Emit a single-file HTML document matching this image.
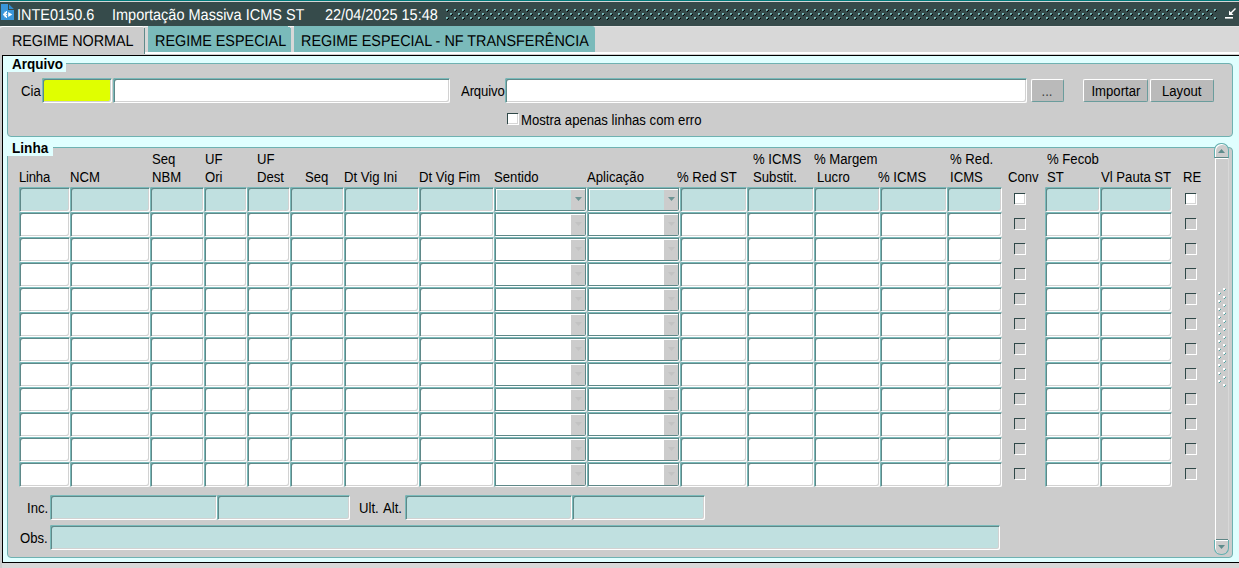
<!DOCTYPE html>
<html><head><meta charset="utf-8"><title>INTE0150.6</title>
<style>
html,body{margin:0;padding:0}
body{width:1239px;height:568px;overflow:hidden;position:relative;background:#d8d8d8;
 font-family:"Liberation Sans",sans-serif;font-size:13px}
body>div,body>span,body>svg{position:absolute;display:block}
span{white-space:nowrap;line-height:16px;transform:scaleX(0.9094);transform-origin:0 0}
.f{border-radius:2px;box-shadow:inset 1px 1px 0 #7ababa, inset -1px -1px 0 #fff, inset 2px 2px 0 #5f8888, inset -2px -2px 0 #d2d2d2}
.f.d{box-shadow:inset 1px 1px 0 #7ababa, inset -1px -1px 0 #fff, inset 2px 2px 0 #5f8888, inset -2px -2px 0 #5f8888}
.b b{display:inline-block;font-weight:normal;font-size:14.46px;transform:scaleX(0.9094)}
.b{background:#bababa;border:1px solid;border-color:#fff #6a9c9c #6a9c9c #fff;border-radius:2px;text-align:center;font-size:13px}
.c.x{box-shadow:inset 1px 1px 0 #2f4848, 1px 1px 0 #fff}
.c{width:11px;height:11px;box-shadow:inset 1px 1px 0 #2f4848, inset -1px -1px 0 #d6d6d6, 1px 1px 0 #fff}
</style></head>
<body>
<div  style="left:0px;top:0px;width:1239px;height:1px;background:#007b7b;"></div>
<div  style="left:0px;top:1px;width:1239px;height:1px;background:#d6d6d6;"></div>
<div  style="left:0px;top:2px;width:1239px;height:24px;background:#364b4b;"></div>
<svg style="left:0px;top:3px" width="16" height="18" viewBox="0 3 16 18">
<path d="M1 4H8V10H14V20H1Z" fill="#3a96d9"/>
<path d="M9 4.2L13.8 9H9Z" fill="#2f8dd0"/>
<g fill="#fff">
<path d="M7 11.1L6.2 11L5.9 12L4.9 11.6L4.3 12.2L4.8 13.1L3.6 13.5L3 14.5L3.6 15.5L4.8 15.9L4.3 16.8L4.9 17.4L5.9 17L6.2 18L7 17.9V16.2A1.8 1.8 0 0 1 7 12.8Z"/>
<circle cx="6.5" cy="14.5" r=".7"/>
<path d="M8.2 12L12.3 14.5L8.2 17Z"/>
</g></svg>
<span style="left:17px;top:6px;font-size:15.76px;color:#fff;line-height:20px;transform:scaleX(0.92);text-rendering:geometricPrecision;">INTE0150.6</span>
<span style="left:112px;top:6px;font-size:15.76px;color:#fff;line-height:20px;transform:scaleX(0.92);text-rendering:geometricPrecision;">Importação Massiva ICMS ST</span>
<span style="left:325px;top:6px;font-size:15.76px;color:#fff;line-height:20px;transform:scaleX(0.92);text-rendering:geometricPrecision;">22/04/2025 15:48</span>
<svg style="left:446px;top:9px" width="771" height="11" shape-rendering="crispEdges">
<defs><pattern id="dp" width="8" height="8" patternUnits="userSpaceOnUse">
<rect x="0" y="0" width="2" height="2" fill="#7cbdbd"/><rect x="1" y="1" width="1" height="1" fill="#4a7c7c"/><rect x="2" y="1" width="1" height="1" fill="#000"/><rect x="1" y="2" width="1" height="1" fill="#000"/>
<rect x="4" y="4" width="2" height="2" fill="#7cbdbd"/><rect x="5" y="5" width="1" height="1" fill="#4a7c7c"/><rect x="6" y="5" width="1" height="1" fill="#000"/><rect x="5" y="6" width="1" height="1" fill="#000"/>
</pattern></defs>
<rect width="771" height="11" fill="url(#dp)"/></svg>
<svg style="left:1222px;top:6px" width="16" height="14" viewBox="0 0 16 14">
<path d="M13.5 2.5L8 8" stroke="#fff" stroke-width="1.4" fill="none"/>
<path d="M7 4.5V9H11.5Z" fill="#fff"/>
<rect x="3" y="11" width="8" height="1.6" fill="#fff"/>
</svg>
<div  style="left:0px;top:26px;width:1239px;height:1px;background:#e2e2e2;"></div>
<div  style="left:0px;top:52px;width:1239px;height:2px;background:#ffffff;"></div>
<div  style="left:0px;top:54px;width:1239px;height:1px;background:#d0d0d0;"></div>
<div style="left:0;top:26px;width:144px;height:29px;background:#cccccc;border-top:1px solid #fff;border-top-left-radius:3px;border-top-right-radius:2px;box-sizing:border-box"></div>
<div  style="left:144px;top:28px;width:1px;height:26px;background:#5f8a8a;"></div>
<div  style="left:144px;top:26px;width:7px;height:1px;background:#f4f4f4;"></div>
<span style="left:12px;top:32px;font-size:15.65px;color:#000;line-height:20px;letter-spacing:-0.08px;transform:scaleX(0.92);text-rendering:geometricPrecision;">REGIME NORMAL</span>
<div  style="left:148px;top:26px;width:143px;height:26px;background:#7ababa;"></div>
<span style="left:155px;top:32px;font-size:15.65px;color:#000;line-height:20px;transform:scaleX(0.92);text-rendering:geometricPrecision;">REGIME ESPECIAL</span>
<div  style="left:288px;top:26px;width:9px;height:1px;background:#f4f4f4;"></div>
<div  style="left:290px;top:27px;width:5px;height:1px;background:#dcdcdc;"></div>
<div style="left:294px;top:26px;width:301px;height:26px;background:#7ababa;border-top-right-radius:3px"></div>
<span style="left:301px;top:32px;font-size:15.65px;color:#000;line-height:20px;transform:scaleX(0.92);text-rendering:geometricPrecision;">REGIME ESPECIAL - NF TRANSFERÊNCIA</span>
<div  style="left:2px;top:55px;width:1237px;height:508px;background:#000;"></div>
<div  style="left:3px;top:56px;width:1236px;height:506px;background:#e0ffff;"></div>
<div  style="left:0px;top:563px;width:1239px;height:5px;background:#d8d8d8;"></div>
<div  style="left:0px;top:55px;width:2px;height:513px;background:#cccccc;"></div>
<div style="left:7px;top:63px;width:1224px;height:72px;background:#cccccc;border:1px solid #6fb2b2;border-radius:4px"></div>
<div style="left:7px;top:147px;width:1224px;height:409px;background:#cccccc;border:1px solid #6fb2b2;border-radius:4px"></div>
<div  style="left:3px;top:56px;width:63px;height:16px;background:#e0ffff;"></div>
<span style="left:12px;top:56px;font-size:14.46px;color:#000;font-weight:bold;transform:scaleX(0.9336);">Arquivo</span>
<div  style="left:3px;top:140px;width:50px;height:16px;background:#e0ffff;"></div>
<span style="left:12px;top:140px;font-size:14.46px;color:#000;font-weight:bold;transform:scaleX(0.9405);">Linha</span>
<span style="left:21px;top:83px;font-size:14.46px;color:#000;">Cia</span>
<div class="f" style="left:42px;top:78px;width:70px;height:25px;background:#e0ff00"></div>
<div class="f" style="left:113px;top:78px;width:337px;height:25px;background:#fff"></div>
<span style="left:461px;top:83px;font-size:14.46px;color:#000;letter-spacing:-0.15px;">Arquivo</span>
<div class="f" style="left:505px;top:78px;width:522px;height:25px;background:#fff"></div>
<div class="b" style="left:1031px;top:79px;width:31px;height:21px;line-height:22px;color:#444"><b>...</b></div>
<div class="b" style="left:1083px;top:79px;width:63px;height:21px;line-height:22px;color:#000"><b>Importar</b></div>
<div class="b" style="left:1150px;top:79px;width:62px;height:21px;line-height:22px;color:#000"><b>Layout</b></div>
<div class="c" style="left:507px;top:113px;background:#fff"></div>
<span style="left:521px;top:112px;font-size:14.46px;color:#000;">Mostra apenas linhas com erro</span>
<span style="left:19px;top:169px;font-size:14.46px;color:#000;letter-spacing:-0.25px;">Linha</span>
<span style="left:70px;top:169px;font-size:14.46px;color:#000;">NCM</span>
<span style="left:152px;top:151px;font-size:14.46px;color:#000;">Seq</span>
<span style="left:152px;top:169px;font-size:14.46px;color:#000;">NBM</span>
<span style="left:205px;top:151px;font-size:14.46px;color:#000;">UF</span>
<span style="left:205px;top:169px;font-size:14.46px;color:#000;">Ori</span>
<span style="left:257px;top:151px;font-size:14.46px;color:#000;">UF</span>
<span style="left:257px;top:169px;font-size:14.46px;color:#000;">Dest</span>
<span style="left:305px;top:169px;font-size:14.46px;color:#000;">Seq</span>
<span style="left:344px;top:169px;font-size:14.46px;color:#000;">Dt Vig Ini</span>
<span style="left:419px;top:169px;font-size:14.46px;color:#000;">Dt Vig Fim</span>
<span style="left:494px;top:169px;font-size:14.46px;color:#000;">Sentido</span>
<span style="left:587px;top:169px;font-size:14.46px;color:#000;">Aplicação</span>
<span style="left:677px;top:169px;font-size:14.46px;color:#000;">% Red ST</span>
<span style="left:753px;top:151px;font-size:14.46px;color:#000;">% ICMS</span>
<span style="left:753px;top:169px;font-size:14.46px;color:#000;">Substit.</span>
<span style="left:814px;top:151px;font-size:14.46px;color:#000;">% Margem</span>
<span style="left:817px;top:169px;font-size:14.46px;color:#000;">Lucro</span>
<span style="left:878px;top:169px;font-size:14.46px;color:#000;">% ICMS</span>
<span style="left:950px;top:151px;font-size:14.46px;color:#000;">% Red.</span>
<span style="left:950px;top:169px;font-size:14.46px;color:#000;">ICMS</span>
<span style="left:1008px;top:169px;font-size:14.46px;color:#000;">Conv</span>
<span style="left:1047px;top:151px;font-size:14.46px;color:#000;">% Fecob</span>
<span style="left:1047px;top:169px;font-size:14.46px;color:#000;">ST</span>
<span style="left:1101px;top:169px;font-size:14.46px;color:#000;">Vl Pauta ST</span>
<span style="left:1183px;top:169px;font-size:14.46px;color:#000;">RE</span>
<div class="f" style="left:19px;top:187px;width:51px;height:25px;background:#c0e0e0"></div>
<div class="f" style="left:70px;top:187px;width:80px;height:25px;background:#c0e0e0"></div>
<div class="f" style="left:150px;top:187px;width:54px;height:25px;background:#c0e0e0"></div>
<div class="f" style="left:204px;top:187px;width:43px;height:25px;background:#c0e0e0"></div>
<div class="f" style="left:247px;top:187px;width:43px;height:25px;background:#c0e0e0"></div>
<div class="f" style="left:290px;top:187px;width:54px;height:25px;background:#c0e0e0"></div>
<div class="f" style="left:344px;top:187px;width:75px;height:25px;background:#c0e0e0"></div>
<div class="f" style="left:419px;top:187px;width:75px;height:25px;background:#c0e0e0"></div>
<div class="f d" style="left:494px;top:187px;width:93px;height:25px;background:#c0e0e0"></div>
<div style="left:496px;top:189px;width:89px;height:1px;background:#fff"></div>
<div style="left:496px;top:189px;width:1px;height:21px;background:#fff"></div>
<div  style="left:571px;top:190px;width:14px;height:20px;background:#cccccc;"></div>
<svg style="left:575px;top:197px" width="7" height="4"><path d="M0 0H7L3.5 4Z" fill="#6d9494"/></svg>
<div class="f d" style="left:587px;top:187px;width:93px;height:25px;background:#c0e0e0"></div>
<div style="left:589px;top:189px;width:89px;height:1px;background:#fff"></div>
<div style="left:589px;top:189px;width:1px;height:21px;background:#fff"></div>
<div  style="left:664px;top:190px;width:14px;height:20px;background:#cccccc;"></div>
<svg style="left:668px;top:197px" width="7" height="4"><path d="M0 0H7L3.5 4Z" fill="#6d9494"/></svg>
<div class="f" style="left:680px;top:187px;width:67px;height:25px;background:#c0e0e0"></div>
<div class="f" style="left:747px;top:187px;width:67px;height:25px;background:#c0e0e0"></div>
<div class="f" style="left:814px;top:187px;width:66px;height:25px;background:#c0e0e0"></div>
<div class="f" style="left:880px;top:187px;width:67px;height:25px;background:#c0e0e0"></div>
<div class="f" style="left:947px;top:187px;width:55px;height:25px;background:#c0e0e0"></div>
<div class="f" style="left:1045px;top:187px;width:55px;height:25px;background:#c0e0e0"></div>
<div class="f" style="left:1100px;top:187px;width:72px;height:25px;background:#c0e0e0"></div>
<div class="c" style="left:1014px;top:193px;background:#fff"></div>
<div class="c" style="left:1185px;top:193px;background:#fff"></div>
<div class="f" style="left:19px;top:212px;width:51px;height:25px;background:#fff"></div>
<div class="f" style="left:70px;top:212px;width:80px;height:25px;background:#fff"></div>
<div class="f" style="left:150px;top:212px;width:54px;height:25px;background:#fff"></div>
<div class="f" style="left:204px;top:212px;width:43px;height:25px;background:#fff"></div>
<div class="f" style="left:247px;top:212px;width:43px;height:25px;background:#fff"></div>
<div class="f" style="left:290px;top:212px;width:54px;height:25px;background:#fff"></div>
<div class="f" style="left:344px;top:212px;width:75px;height:25px;background:#fff"></div>
<div class="f" style="left:419px;top:212px;width:75px;height:25px;background:#fff"></div>
<div class="f d" style="left:494px;top:212px;width:93px;height:25px;background:#fff"></div>
<div style="left:496px;top:214px;width:89px;height:1px;background:#fff"></div>
<div style="left:496px;top:214px;width:1px;height:21px;background:#fff"></div>
<div  style="left:571px;top:215px;width:14px;height:20px;background:#cccccc;"></div>
<svg style="left:575px;top:222px" width="7" height="4"><path d="M0 0H7L3.5 4Z" fill="#c2c2c2"/></svg>
<div class="f d" style="left:587px;top:212px;width:93px;height:25px;background:#fff"></div>
<div style="left:589px;top:214px;width:89px;height:1px;background:#fff"></div>
<div style="left:589px;top:214px;width:1px;height:21px;background:#fff"></div>
<div  style="left:664px;top:215px;width:14px;height:20px;background:#cccccc;"></div>
<svg style="left:668px;top:222px" width="7" height="4"><path d="M0 0H7L3.5 4Z" fill="#c2c2c2"/></svg>
<div class="f" style="left:680px;top:212px;width:67px;height:25px;background:#fff"></div>
<div class="f" style="left:747px;top:212px;width:67px;height:25px;background:#fff"></div>
<div class="f" style="left:814px;top:212px;width:66px;height:25px;background:#fff"></div>
<div class="f" style="left:880px;top:212px;width:67px;height:25px;background:#fff"></div>
<div class="f" style="left:947px;top:212px;width:55px;height:25px;background:#fff"></div>
<div class="f" style="left:1045px;top:212px;width:55px;height:25px;background:#fff"></div>
<div class="f" style="left:1100px;top:212px;width:72px;height:25px;background:#fff"></div>
<div class="c x" style="left:1014px;top:218px;background:#cccccc"></div>
<div class="c x" style="left:1185px;top:218px;background:#cccccc"></div>
<div class="f" style="left:19px;top:237px;width:51px;height:25px;background:#fff"></div>
<div class="f" style="left:70px;top:237px;width:80px;height:25px;background:#fff"></div>
<div class="f" style="left:150px;top:237px;width:54px;height:25px;background:#fff"></div>
<div class="f" style="left:204px;top:237px;width:43px;height:25px;background:#fff"></div>
<div class="f" style="left:247px;top:237px;width:43px;height:25px;background:#fff"></div>
<div class="f" style="left:290px;top:237px;width:54px;height:25px;background:#fff"></div>
<div class="f" style="left:344px;top:237px;width:75px;height:25px;background:#fff"></div>
<div class="f" style="left:419px;top:237px;width:75px;height:25px;background:#fff"></div>
<div class="f d" style="left:494px;top:237px;width:93px;height:25px;background:#fff"></div>
<div style="left:496px;top:239px;width:89px;height:1px;background:#fff"></div>
<div style="left:496px;top:239px;width:1px;height:21px;background:#fff"></div>
<div  style="left:571px;top:240px;width:14px;height:20px;background:#cccccc;"></div>
<svg style="left:575px;top:247px" width="7" height="4"><path d="M0 0H7L3.5 4Z" fill="#c2c2c2"/></svg>
<div class="f d" style="left:587px;top:237px;width:93px;height:25px;background:#fff"></div>
<div style="left:589px;top:239px;width:89px;height:1px;background:#fff"></div>
<div style="left:589px;top:239px;width:1px;height:21px;background:#fff"></div>
<div  style="left:664px;top:240px;width:14px;height:20px;background:#cccccc;"></div>
<svg style="left:668px;top:247px" width="7" height="4"><path d="M0 0H7L3.5 4Z" fill="#c2c2c2"/></svg>
<div class="f" style="left:680px;top:237px;width:67px;height:25px;background:#fff"></div>
<div class="f" style="left:747px;top:237px;width:67px;height:25px;background:#fff"></div>
<div class="f" style="left:814px;top:237px;width:66px;height:25px;background:#fff"></div>
<div class="f" style="left:880px;top:237px;width:67px;height:25px;background:#fff"></div>
<div class="f" style="left:947px;top:237px;width:55px;height:25px;background:#fff"></div>
<div class="f" style="left:1045px;top:237px;width:55px;height:25px;background:#fff"></div>
<div class="f" style="left:1100px;top:237px;width:72px;height:25px;background:#fff"></div>
<div class="c x" style="left:1014px;top:243px;background:#cccccc"></div>
<div class="c x" style="left:1185px;top:243px;background:#cccccc"></div>
<div class="f" style="left:19px;top:262px;width:51px;height:25px;background:#fff"></div>
<div class="f" style="left:70px;top:262px;width:80px;height:25px;background:#fff"></div>
<div class="f" style="left:150px;top:262px;width:54px;height:25px;background:#fff"></div>
<div class="f" style="left:204px;top:262px;width:43px;height:25px;background:#fff"></div>
<div class="f" style="left:247px;top:262px;width:43px;height:25px;background:#fff"></div>
<div class="f" style="left:290px;top:262px;width:54px;height:25px;background:#fff"></div>
<div class="f" style="left:344px;top:262px;width:75px;height:25px;background:#fff"></div>
<div class="f" style="left:419px;top:262px;width:75px;height:25px;background:#fff"></div>
<div class="f d" style="left:494px;top:262px;width:93px;height:25px;background:#fff"></div>
<div style="left:496px;top:264px;width:89px;height:1px;background:#fff"></div>
<div style="left:496px;top:264px;width:1px;height:21px;background:#fff"></div>
<div  style="left:571px;top:265px;width:14px;height:20px;background:#cccccc;"></div>
<svg style="left:575px;top:272px" width="7" height="4"><path d="M0 0H7L3.5 4Z" fill="#c2c2c2"/></svg>
<div class="f d" style="left:587px;top:262px;width:93px;height:25px;background:#fff"></div>
<div style="left:589px;top:264px;width:89px;height:1px;background:#fff"></div>
<div style="left:589px;top:264px;width:1px;height:21px;background:#fff"></div>
<div  style="left:664px;top:265px;width:14px;height:20px;background:#cccccc;"></div>
<svg style="left:668px;top:272px" width="7" height="4"><path d="M0 0H7L3.5 4Z" fill="#c2c2c2"/></svg>
<div class="f" style="left:680px;top:262px;width:67px;height:25px;background:#fff"></div>
<div class="f" style="left:747px;top:262px;width:67px;height:25px;background:#fff"></div>
<div class="f" style="left:814px;top:262px;width:66px;height:25px;background:#fff"></div>
<div class="f" style="left:880px;top:262px;width:67px;height:25px;background:#fff"></div>
<div class="f" style="left:947px;top:262px;width:55px;height:25px;background:#fff"></div>
<div class="f" style="left:1045px;top:262px;width:55px;height:25px;background:#fff"></div>
<div class="f" style="left:1100px;top:262px;width:72px;height:25px;background:#fff"></div>
<div class="c x" style="left:1014px;top:268px;background:#cccccc"></div>
<div class="c x" style="left:1185px;top:268px;background:#cccccc"></div>
<div class="f" style="left:19px;top:287px;width:51px;height:25px;background:#fff"></div>
<div class="f" style="left:70px;top:287px;width:80px;height:25px;background:#fff"></div>
<div class="f" style="left:150px;top:287px;width:54px;height:25px;background:#fff"></div>
<div class="f" style="left:204px;top:287px;width:43px;height:25px;background:#fff"></div>
<div class="f" style="left:247px;top:287px;width:43px;height:25px;background:#fff"></div>
<div class="f" style="left:290px;top:287px;width:54px;height:25px;background:#fff"></div>
<div class="f" style="left:344px;top:287px;width:75px;height:25px;background:#fff"></div>
<div class="f" style="left:419px;top:287px;width:75px;height:25px;background:#fff"></div>
<div class="f d" style="left:494px;top:287px;width:93px;height:25px;background:#fff"></div>
<div style="left:496px;top:289px;width:89px;height:1px;background:#fff"></div>
<div style="left:496px;top:289px;width:1px;height:21px;background:#fff"></div>
<div  style="left:571px;top:290px;width:14px;height:20px;background:#cccccc;"></div>
<svg style="left:575px;top:297px" width="7" height="4"><path d="M0 0H7L3.5 4Z" fill="#c2c2c2"/></svg>
<div class="f d" style="left:587px;top:287px;width:93px;height:25px;background:#fff"></div>
<div style="left:589px;top:289px;width:89px;height:1px;background:#fff"></div>
<div style="left:589px;top:289px;width:1px;height:21px;background:#fff"></div>
<div  style="left:664px;top:290px;width:14px;height:20px;background:#cccccc;"></div>
<svg style="left:668px;top:297px" width="7" height="4"><path d="M0 0H7L3.5 4Z" fill="#c2c2c2"/></svg>
<div class="f" style="left:680px;top:287px;width:67px;height:25px;background:#fff"></div>
<div class="f" style="left:747px;top:287px;width:67px;height:25px;background:#fff"></div>
<div class="f" style="left:814px;top:287px;width:66px;height:25px;background:#fff"></div>
<div class="f" style="left:880px;top:287px;width:67px;height:25px;background:#fff"></div>
<div class="f" style="left:947px;top:287px;width:55px;height:25px;background:#fff"></div>
<div class="f" style="left:1045px;top:287px;width:55px;height:25px;background:#fff"></div>
<div class="f" style="left:1100px;top:287px;width:72px;height:25px;background:#fff"></div>
<div class="c x" style="left:1014px;top:293px;background:#cccccc"></div>
<div class="c x" style="left:1185px;top:293px;background:#cccccc"></div>
<div class="f" style="left:19px;top:312px;width:51px;height:25px;background:#fff"></div>
<div class="f" style="left:70px;top:312px;width:80px;height:25px;background:#fff"></div>
<div class="f" style="left:150px;top:312px;width:54px;height:25px;background:#fff"></div>
<div class="f" style="left:204px;top:312px;width:43px;height:25px;background:#fff"></div>
<div class="f" style="left:247px;top:312px;width:43px;height:25px;background:#fff"></div>
<div class="f" style="left:290px;top:312px;width:54px;height:25px;background:#fff"></div>
<div class="f" style="left:344px;top:312px;width:75px;height:25px;background:#fff"></div>
<div class="f" style="left:419px;top:312px;width:75px;height:25px;background:#fff"></div>
<div class="f d" style="left:494px;top:312px;width:93px;height:25px;background:#fff"></div>
<div style="left:496px;top:314px;width:89px;height:1px;background:#fff"></div>
<div style="left:496px;top:314px;width:1px;height:21px;background:#fff"></div>
<div  style="left:571px;top:315px;width:14px;height:20px;background:#cccccc;"></div>
<svg style="left:575px;top:322px" width="7" height="4"><path d="M0 0H7L3.5 4Z" fill="#c2c2c2"/></svg>
<div class="f d" style="left:587px;top:312px;width:93px;height:25px;background:#fff"></div>
<div style="left:589px;top:314px;width:89px;height:1px;background:#fff"></div>
<div style="left:589px;top:314px;width:1px;height:21px;background:#fff"></div>
<div  style="left:664px;top:315px;width:14px;height:20px;background:#cccccc;"></div>
<svg style="left:668px;top:322px" width="7" height="4"><path d="M0 0H7L3.5 4Z" fill="#c2c2c2"/></svg>
<div class="f" style="left:680px;top:312px;width:67px;height:25px;background:#fff"></div>
<div class="f" style="left:747px;top:312px;width:67px;height:25px;background:#fff"></div>
<div class="f" style="left:814px;top:312px;width:66px;height:25px;background:#fff"></div>
<div class="f" style="left:880px;top:312px;width:67px;height:25px;background:#fff"></div>
<div class="f" style="left:947px;top:312px;width:55px;height:25px;background:#fff"></div>
<div class="f" style="left:1045px;top:312px;width:55px;height:25px;background:#fff"></div>
<div class="f" style="left:1100px;top:312px;width:72px;height:25px;background:#fff"></div>
<div class="c x" style="left:1014px;top:318px;background:#cccccc"></div>
<div class="c x" style="left:1185px;top:318px;background:#cccccc"></div>
<div class="f" style="left:19px;top:337px;width:51px;height:25px;background:#fff"></div>
<div class="f" style="left:70px;top:337px;width:80px;height:25px;background:#fff"></div>
<div class="f" style="left:150px;top:337px;width:54px;height:25px;background:#fff"></div>
<div class="f" style="left:204px;top:337px;width:43px;height:25px;background:#fff"></div>
<div class="f" style="left:247px;top:337px;width:43px;height:25px;background:#fff"></div>
<div class="f" style="left:290px;top:337px;width:54px;height:25px;background:#fff"></div>
<div class="f" style="left:344px;top:337px;width:75px;height:25px;background:#fff"></div>
<div class="f" style="left:419px;top:337px;width:75px;height:25px;background:#fff"></div>
<div class="f d" style="left:494px;top:337px;width:93px;height:25px;background:#fff"></div>
<div style="left:496px;top:339px;width:89px;height:1px;background:#fff"></div>
<div style="left:496px;top:339px;width:1px;height:21px;background:#fff"></div>
<div  style="left:571px;top:340px;width:14px;height:20px;background:#cccccc;"></div>
<svg style="left:575px;top:347px" width="7" height="4"><path d="M0 0H7L3.5 4Z" fill="#c2c2c2"/></svg>
<div class="f d" style="left:587px;top:337px;width:93px;height:25px;background:#fff"></div>
<div style="left:589px;top:339px;width:89px;height:1px;background:#fff"></div>
<div style="left:589px;top:339px;width:1px;height:21px;background:#fff"></div>
<div  style="left:664px;top:340px;width:14px;height:20px;background:#cccccc;"></div>
<svg style="left:668px;top:347px" width="7" height="4"><path d="M0 0H7L3.5 4Z" fill="#c2c2c2"/></svg>
<div class="f" style="left:680px;top:337px;width:67px;height:25px;background:#fff"></div>
<div class="f" style="left:747px;top:337px;width:67px;height:25px;background:#fff"></div>
<div class="f" style="left:814px;top:337px;width:66px;height:25px;background:#fff"></div>
<div class="f" style="left:880px;top:337px;width:67px;height:25px;background:#fff"></div>
<div class="f" style="left:947px;top:337px;width:55px;height:25px;background:#fff"></div>
<div class="f" style="left:1045px;top:337px;width:55px;height:25px;background:#fff"></div>
<div class="f" style="left:1100px;top:337px;width:72px;height:25px;background:#fff"></div>
<div class="c x" style="left:1014px;top:343px;background:#cccccc"></div>
<div class="c x" style="left:1185px;top:343px;background:#cccccc"></div>
<div class="f" style="left:19px;top:362px;width:51px;height:25px;background:#fff"></div>
<div class="f" style="left:70px;top:362px;width:80px;height:25px;background:#fff"></div>
<div class="f" style="left:150px;top:362px;width:54px;height:25px;background:#fff"></div>
<div class="f" style="left:204px;top:362px;width:43px;height:25px;background:#fff"></div>
<div class="f" style="left:247px;top:362px;width:43px;height:25px;background:#fff"></div>
<div class="f" style="left:290px;top:362px;width:54px;height:25px;background:#fff"></div>
<div class="f" style="left:344px;top:362px;width:75px;height:25px;background:#fff"></div>
<div class="f" style="left:419px;top:362px;width:75px;height:25px;background:#fff"></div>
<div class="f d" style="left:494px;top:362px;width:93px;height:25px;background:#fff"></div>
<div style="left:496px;top:364px;width:89px;height:1px;background:#fff"></div>
<div style="left:496px;top:364px;width:1px;height:21px;background:#fff"></div>
<div  style="left:571px;top:365px;width:14px;height:20px;background:#cccccc;"></div>
<svg style="left:575px;top:372px" width="7" height="4"><path d="M0 0H7L3.5 4Z" fill="#c2c2c2"/></svg>
<div class="f d" style="left:587px;top:362px;width:93px;height:25px;background:#fff"></div>
<div style="left:589px;top:364px;width:89px;height:1px;background:#fff"></div>
<div style="left:589px;top:364px;width:1px;height:21px;background:#fff"></div>
<div  style="left:664px;top:365px;width:14px;height:20px;background:#cccccc;"></div>
<svg style="left:668px;top:372px" width="7" height="4"><path d="M0 0H7L3.5 4Z" fill="#c2c2c2"/></svg>
<div class="f" style="left:680px;top:362px;width:67px;height:25px;background:#fff"></div>
<div class="f" style="left:747px;top:362px;width:67px;height:25px;background:#fff"></div>
<div class="f" style="left:814px;top:362px;width:66px;height:25px;background:#fff"></div>
<div class="f" style="left:880px;top:362px;width:67px;height:25px;background:#fff"></div>
<div class="f" style="left:947px;top:362px;width:55px;height:25px;background:#fff"></div>
<div class="f" style="left:1045px;top:362px;width:55px;height:25px;background:#fff"></div>
<div class="f" style="left:1100px;top:362px;width:72px;height:25px;background:#fff"></div>
<div class="c x" style="left:1014px;top:368px;background:#cccccc"></div>
<div class="c x" style="left:1185px;top:368px;background:#cccccc"></div>
<div class="f" style="left:19px;top:387px;width:51px;height:25px;background:#fff"></div>
<div class="f" style="left:70px;top:387px;width:80px;height:25px;background:#fff"></div>
<div class="f" style="left:150px;top:387px;width:54px;height:25px;background:#fff"></div>
<div class="f" style="left:204px;top:387px;width:43px;height:25px;background:#fff"></div>
<div class="f" style="left:247px;top:387px;width:43px;height:25px;background:#fff"></div>
<div class="f" style="left:290px;top:387px;width:54px;height:25px;background:#fff"></div>
<div class="f" style="left:344px;top:387px;width:75px;height:25px;background:#fff"></div>
<div class="f" style="left:419px;top:387px;width:75px;height:25px;background:#fff"></div>
<div class="f d" style="left:494px;top:387px;width:93px;height:25px;background:#fff"></div>
<div style="left:496px;top:389px;width:89px;height:1px;background:#fff"></div>
<div style="left:496px;top:389px;width:1px;height:21px;background:#fff"></div>
<div  style="left:571px;top:390px;width:14px;height:20px;background:#cccccc;"></div>
<svg style="left:575px;top:397px" width="7" height="4"><path d="M0 0H7L3.5 4Z" fill="#c2c2c2"/></svg>
<div class="f d" style="left:587px;top:387px;width:93px;height:25px;background:#fff"></div>
<div style="left:589px;top:389px;width:89px;height:1px;background:#fff"></div>
<div style="left:589px;top:389px;width:1px;height:21px;background:#fff"></div>
<div  style="left:664px;top:390px;width:14px;height:20px;background:#cccccc;"></div>
<svg style="left:668px;top:397px" width="7" height="4"><path d="M0 0H7L3.5 4Z" fill="#c2c2c2"/></svg>
<div class="f" style="left:680px;top:387px;width:67px;height:25px;background:#fff"></div>
<div class="f" style="left:747px;top:387px;width:67px;height:25px;background:#fff"></div>
<div class="f" style="left:814px;top:387px;width:66px;height:25px;background:#fff"></div>
<div class="f" style="left:880px;top:387px;width:67px;height:25px;background:#fff"></div>
<div class="f" style="left:947px;top:387px;width:55px;height:25px;background:#fff"></div>
<div class="f" style="left:1045px;top:387px;width:55px;height:25px;background:#fff"></div>
<div class="f" style="left:1100px;top:387px;width:72px;height:25px;background:#fff"></div>
<div class="c x" style="left:1014px;top:393px;background:#cccccc"></div>
<div class="c x" style="left:1185px;top:393px;background:#cccccc"></div>
<div class="f" style="left:19px;top:412px;width:51px;height:25px;background:#fff"></div>
<div class="f" style="left:70px;top:412px;width:80px;height:25px;background:#fff"></div>
<div class="f" style="left:150px;top:412px;width:54px;height:25px;background:#fff"></div>
<div class="f" style="left:204px;top:412px;width:43px;height:25px;background:#fff"></div>
<div class="f" style="left:247px;top:412px;width:43px;height:25px;background:#fff"></div>
<div class="f" style="left:290px;top:412px;width:54px;height:25px;background:#fff"></div>
<div class="f" style="left:344px;top:412px;width:75px;height:25px;background:#fff"></div>
<div class="f" style="left:419px;top:412px;width:75px;height:25px;background:#fff"></div>
<div class="f d" style="left:494px;top:412px;width:93px;height:25px;background:#fff"></div>
<div style="left:496px;top:414px;width:89px;height:1px;background:#fff"></div>
<div style="left:496px;top:414px;width:1px;height:21px;background:#fff"></div>
<div  style="left:571px;top:415px;width:14px;height:20px;background:#cccccc;"></div>
<svg style="left:575px;top:422px" width="7" height="4"><path d="M0 0H7L3.5 4Z" fill="#c2c2c2"/></svg>
<div class="f d" style="left:587px;top:412px;width:93px;height:25px;background:#fff"></div>
<div style="left:589px;top:414px;width:89px;height:1px;background:#fff"></div>
<div style="left:589px;top:414px;width:1px;height:21px;background:#fff"></div>
<div  style="left:664px;top:415px;width:14px;height:20px;background:#cccccc;"></div>
<svg style="left:668px;top:422px" width="7" height="4"><path d="M0 0H7L3.5 4Z" fill="#c2c2c2"/></svg>
<div class="f" style="left:680px;top:412px;width:67px;height:25px;background:#fff"></div>
<div class="f" style="left:747px;top:412px;width:67px;height:25px;background:#fff"></div>
<div class="f" style="left:814px;top:412px;width:66px;height:25px;background:#fff"></div>
<div class="f" style="left:880px;top:412px;width:67px;height:25px;background:#fff"></div>
<div class="f" style="left:947px;top:412px;width:55px;height:25px;background:#fff"></div>
<div class="f" style="left:1045px;top:412px;width:55px;height:25px;background:#fff"></div>
<div class="f" style="left:1100px;top:412px;width:72px;height:25px;background:#fff"></div>
<div class="c x" style="left:1014px;top:418px;background:#cccccc"></div>
<div class="c x" style="left:1185px;top:418px;background:#cccccc"></div>
<div class="f" style="left:19px;top:437px;width:51px;height:25px;background:#fff"></div>
<div class="f" style="left:70px;top:437px;width:80px;height:25px;background:#fff"></div>
<div class="f" style="left:150px;top:437px;width:54px;height:25px;background:#fff"></div>
<div class="f" style="left:204px;top:437px;width:43px;height:25px;background:#fff"></div>
<div class="f" style="left:247px;top:437px;width:43px;height:25px;background:#fff"></div>
<div class="f" style="left:290px;top:437px;width:54px;height:25px;background:#fff"></div>
<div class="f" style="left:344px;top:437px;width:75px;height:25px;background:#fff"></div>
<div class="f" style="left:419px;top:437px;width:75px;height:25px;background:#fff"></div>
<div class="f d" style="left:494px;top:437px;width:93px;height:25px;background:#fff"></div>
<div style="left:496px;top:439px;width:89px;height:1px;background:#fff"></div>
<div style="left:496px;top:439px;width:1px;height:21px;background:#fff"></div>
<div  style="left:571px;top:440px;width:14px;height:20px;background:#cccccc;"></div>
<svg style="left:575px;top:447px" width="7" height="4"><path d="M0 0H7L3.5 4Z" fill="#c2c2c2"/></svg>
<div class="f d" style="left:587px;top:437px;width:93px;height:25px;background:#fff"></div>
<div style="left:589px;top:439px;width:89px;height:1px;background:#fff"></div>
<div style="left:589px;top:439px;width:1px;height:21px;background:#fff"></div>
<div  style="left:664px;top:440px;width:14px;height:20px;background:#cccccc;"></div>
<svg style="left:668px;top:447px" width="7" height="4"><path d="M0 0H7L3.5 4Z" fill="#c2c2c2"/></svg>
<div class="f" style="left:680px;top:437px;width:67px;height:25px;background:#fff"></div>
<div class="f" style="left:747px;top:437px;width:67px;height:25px;background:#fff"></div>
<div class="f" style="left:814px;top:437px;width:66px;height:25px;background:#fff"></div>
<div class="f" style="left:880px;top:437px;width:67px;height:25px;background:#fff"></div>
<div class="f" style="left:947px;top:437px;width:55px;height:25px;background:#fff"></div>
<div class="f" style="left:1045px;top:437px;width:55px;height:25px;background:#fff"></div>
<div class="f" style="left:1100px;top:437px;width:72px;height:25px;background:#fff"></div>
<div class="c x" style="left:1014px;top:443px;background:#cccccc"></div>
<div class="c x" style="left:1185px;top:443px;background:#cccccc"></div>
<div class="f" style="left:19px;top:462px;width:51px;height:25px;background:#fff"></div>
<div class="f" style="left:70px;top:462px;width:80px;height:25px;background:#fff"></div>
<div class="f" style="left:150px;top:462px;width:54px;height:25px;background:#fff"></div>
<div class="f" style="left:204px;top:462px;width:43px;height:25px;background:#fff"></div>
<div class="f" style="left:247px;top:462px;width:43px;height:25px;background:#fff"></div>
<div class="f" style="left:290px;top:462px;width:54px;height:25px;background:#fff"></div>
<div class="f" style="left:344px;top:462px;width:75px;height:25px;background:#fff"></div>
<div class="f" style="left:419px;top:462px;width:75px;height:25px;background:#fff"></div>
<div class="f d" style="left:494px;top:462px;width:93px;height:25px;background:#fff"></div>
<div style="left:496px;top:464px;width:89px;height:1px;background:#fff"></div>
<div style="left:496px;top:464px;width:1px;height:21px;background:#fff"></div>
<div  style="left:571px;top:465px;width:14px;height:20px;background:#cccccc;"></div>
<svg style="left:575px;top:472px" width="7" height="4"><path d="M0 0H7L3.5 4Z" fill="#c2c2c2"/></svg>
<div class="f d" style="left:587px;top:462px;width:93px;height:25px;background:#fff"></div>
<div style="left:589px;top:464px;width:89px;height:1px;background:#fff"></div>
<div style="left:589px;top:464px;width:1px;height:21px;background:#fff"></div>
<div  style="left:664px;top:465px;width:14px;height:20px;background:#cccccc;"></div>
<svg style="left:668px;top:472px" width="7" height="4"><path d="M0 0H7L3.5 4Z" fill="#c2c2c2"/></svg>
<div class="f" style="left:680px;top:462px;width:67px;height:25px;background:#fff"></div>
<div class="f" style="left:747px;top:462px;width:67px;height:25px;background:#fff"></div>
<div class="f" style="left:814px;top:462px;width:66px;height:25px;background:#fff"></div>
<div class="f" style="left:880px;top:462px;width:67px;height:25px;background:#fff"></div>
<div class="f" style="left:947px;top:462px;width:55px;height:25px;background:#fff"></div>
<div class="f" style="left:1045px;top:462px;width:55px;height:25px;background:#fff"></div>
<div class="f" style="left:1100px;top:462px;width:72px;height:25px;background:#fff"></div>
<div class="c x" style="left:1014px;top:468px;background:#cccccc"></div>
<div class="c x" style="left:1185px;top:468px;background:#cccccc"></div>
<span style="left:27px;top:500px;font-size:14.46px;color:#000;">Inc.</span>
<div class="f" style="left:50px;top:495px;width:167px;height:25px;background:#c0e0e0"></div>
<div class="f" style="left:217px;top:495px;width:133px;height:25px;background:#c0e0e0"></div>
<span style="left:359px;top:500px;font-size:14.46px;color:#000;word-spacing:1.5px;">Ult. Alt.</span>
<div class="f" style="left:405px;top:495px;width:167px;height:25px;background:#c0e0e0"></div>
<div class="f" style="left:572px;top:495px;width:133px;height:25px;background:#c0e0e0"></div>
<span style="left:20px;top:530px;font-size:14.46px;color:#000;">Obs.</span>
<div class="f" style="left:50px;top:525px;width:950px;height:25px;background:#c0e0e0"></div>
<div  style="left:1215px;top:158px;width:1px;height:382px;background:#fff;"></div>
<div  style="left:1228px;top:158px;width:1px;height:382px;background:#d8d8d8;"></div>
<div style="left:1214px;top:143px;width:13px;height:13px;background:#cccccc;border:1px solid #62b0b0;border-bottom-color:#5f8686;border-radius:7px 7px 0 0;box-shadow:inset 1px 1px 0 #fff"></div>
<svg style="left:1218px;top:149px" width="7" height="4"><path d="M0 4H7L3.5 0Z" fill="#5f8c8c"/></svg>
<div  style="left:1215px;top:158px;width:13px;height:1px;background:#fff;"></div>
<div  style="left:1216px;top:539px;width:12px;height:1px;background:#5f8686;"></div>
<div style="left:1214px;top:540px;width:13px;height:14px;background:#cccccc;border:1px solid #62b0b0;border-top:none;border-radius:0 0 7px 7px;box-shadow:inset 1px 1px 0 #fff"></div>
<svg style="left:1218px;top:545px" width="7" height="4"><path d="M0 0H7L3.5 4Z" fill="#5f8c8c"/></svg>
<svg style="left:1218px;top:288px" width="8" height="99" shape-rendering="crispEdges">
<defs><pattern id="gp" width="8" height="8" patternUnits="userSpaceOnUse">
<rect x="5" y="0" width="2" height="2" fill="#fff"/><rect x="7" y="1" width="1" height="1" fill="#4fa3a3"/><rect x="6" y="2" width="1" height="1" fill="#4fa3a3"/>
<rect x="0" y="4" width="2" height="2" fill="#fff"/><rect x="2" y="5" width="1" height="1" fill="#4fa3a3"/><rect x="1" y="6" width="1" height="1" fill="#4fa3a3"/>
</pattern></defs><rect width="8" height="99" fill="url(#gp)"/></svg>
</body></html>
